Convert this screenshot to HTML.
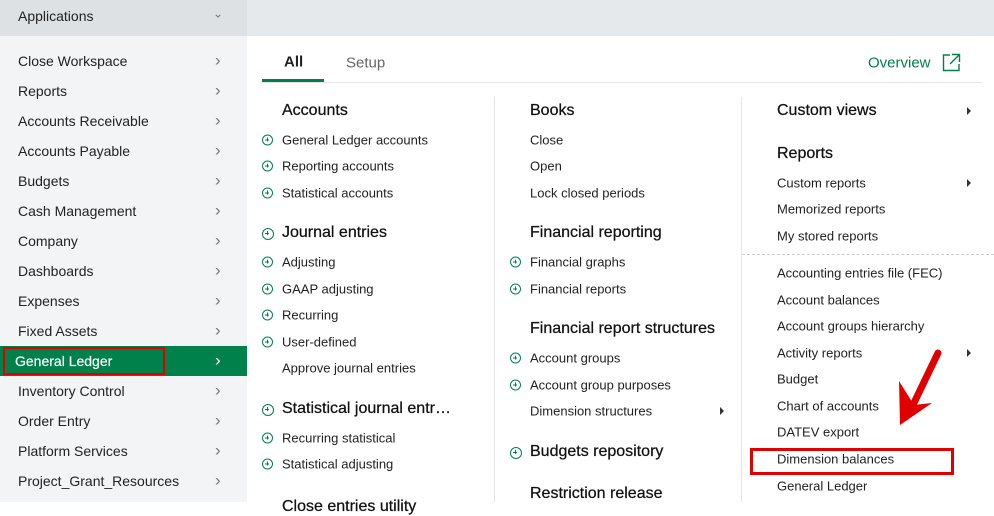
<!DOCTYPE html><html><head><style>
body{margin:0;width:994px;height:502px;overflow:hidden;background:#fff;font-family:"Liberation Sans",sans-serif;color:#222;position:relative}
.a{position:absolute;white-space:nowrap;transform:translateY(-50%)}
.s{font-size:14px;left:18px;color:#222}
.c{position:absolute;left:215px;font-size:17px;color:#777;transform:translateY(-52%)}
.i{font-size:13px;color:#222}
.h{font-size:16px;color:#111;-webkit-text-stroke:0.25px #111}
.p{position:absolute;width:11px;height:11px;border:1.5px solid #00804a;border-radius:50%;transform:translateY(-50%);box-sizing:border-box}
.p:before{content:"";position:absolute;left:2px;top:3.75px;width:4px;height:1.5px;background:#00804a}
.p:after{content:"";position:absolute;left:3.75px;top:2px;width:1.5px;height:4px;background:#00804a}
.tri{position:absolute;width:0;height:0;border-left:4px solid #333;border-top:4px solid transparent;border-bottom:4px solid transparent;transform:translateY(-50%)}
</style></head><body>
<div style="position:absolute;left:0;top:0;width:994px;height:36px;background:#e6e9eb"></div>
<div style="position:absolute;left:0;top:0;width:247px;height:36px;background:#dde1e4"></div>
<div class="a" style="left:18px;top:16px;font-size:14px">Applications</div>
<div class="c" style="top:14px;left:213px;font-size:12px">&#8964;</div>
<div style="position:absolute;left:0;top:36px;width:247px;height:466px;background:#f2f4f5"></div>
<div style="position:absolute;left:0;top:346px;width:247px;height:30px;background:#00804a"></div>
<div style="position:absolute;left:3px;top:347px;width:158px;height:24px;border:2px solid #e00000"></div>
<div class="a s" style="top:61px">Close Workspace</div><div class="c" style="top:61px">›</div>
<div class="a s" style="top:91px">Reports</div><div class="c" style="top:91px">›</div>
<div class="a s" style="top:121px">Accounts Receivable</div><div class="c" style="top:121px">›</div>
<div class="a s" style="top:151px">Accounts Payable</div><div class="c" style="top:151px">›</div>
<div class="a s" style="top:181px">Budgets</div><div class="c" style="top:181px">›</div>
<div class="a s" style="top:211px">Cash Management</div><div class="c" style="top:211px">›</div>
<div class="a s" style="top:241px">Company</div><div class="c" style="top:241px">›</div>
<div class="a s" style="top:271px">Dashboards</div><div class="c" style="top:271px">›</div>
<div class="a s" style="top:301px">Expenses</div><div class="c" style="top:301px">›</div>
<div class="a s" style="top:331px">Fixed Assets</div><div class="c" style="top:331px">›</div>
<div class="a s" style="top:361px;left:15px;color:#fff;-webkit-text-stroke:0.2px #fff">General Ledger</div><div class="c" style="top:361px;color:#fff">›</div>
<div class="a s" style="top:391px">Inventory Control</div><div class="c" style="top:391px">›</div>
<div class="a s" style="top:421px">Order Entry</div><div class="c" style="top:421px">›</div>
<div class="a s" style="top:451px">Platform Services</div><div class="c" style="top:451px">›</div>
<div class="a s" style="top:481px">Project_Grant_Resources</div><div class="c" style="top:481px">›</div>

<div class="a" style="left:284px;top:62px;font-size:15px;font-weight:bold;color:#222">All</div>
<div class="a" style="left:346px;top:63px;font-size:15px;color:#666">Setup</div>
<div style="position:absolute;left:262px;top:82px;width:720px;height:1px;background:#e4e4e4"></div>
<div style="position:absolute;left:262px;top:79px;width:62px;height:3px;background:#00804a"></div>
<div class="a" style="left:868px;top:63px;font-size:15px;color:#00804a">Overview</div>
<svg style="position:absolute;left:942px;top:53px" width="19" height="19" viewBox="0 0 19 19" fill="none" stroke="#00804a" stroke-width="1.4"><path d="M8 2H1.5v15.5H17V11"/><path d="M10 1.5h7.5V9M17.5 1.5L8 11"/></svg>
<div style="position:absolute;left:494px;top:97px;width:1px;height:405px;background:#e6e6e6"></div>
<div style="position:absolute;left:741px;top:97px;width:1px;height:405px;background:#e6e6e6"></div>
<div style="position:absolute;left:742px;top:254px;width:252px;border-top:1px dashed #ccc"></div>

<div class="a h" style="left:282px;top:111px">Accounts</div>
<div class="p" style="left:262px;top:140px"></div><div class="a i" style="left:282px;top:140px">General Ledger accounts</div>
<div class="p" style="left:262px;top:166px"></div><div class="a i" style="left:282px;top:166px">Reporting accounts</div>
<div class="p" style="left:262px;top:193px"></div><div class="a i" style="left:282px;top:193px">Statistical accounts</div>
<div class="p" style="left:262px;top:234px;width:12px;height:12px"></div><div class="a h" style="left:282px;top:233px">Journal entries</div>
<div class="p" style="left:262px;top:262px"></div><div class="a i" style="left:282px;top:262px">Adjusting</div>
<div class="p" style="left:262px;top:289px"></div><div class="a i" style="left:282px;top:289px">GAAP adjusting</div>
<div class="p" style="left:262px;top:315px"></div><div class="a i" style="left:282px;top:315px">Recurring</div>
<div class="p" style="left:262px;top:342px"></div><div class="a i" style="left:282px;top:342px">User-defined</div>
<div class="a i" style="left:282px;top:368px">Approve journal entries</div>
<div class="p" style="left:262px;top:410px;width:12px;height:12px"></div><div class="a h" style="left:282px;top:409px">Statistical journal entr…</div>
<div class="p" style="left:262px;top:438px"></div><div class="a i" style="left:282px;top:438px">Recurring statistical</div>
<div class="p" style="left:262px;top:464px"></div><div class="a i" style="left:282px;top:464px">Statistical adjusting</div>
<div class="a h" style="left:282px;top:507px">Close entries utility</div>

<div class="a h" style="left:530px;top:111px">Books</div>
<div class="a i" style="left:530px;top:140px">Close</div>
<div class="a i" style="left:530px;top:166px">Open</div>
<div class="a i" style="left:530px;top:193px">Lock closed periods</div>
<div class="a h" style="left:530px;top:233px">Financial reporting</div>
<div class="p" style="left:510px;top:262px"></div><div class="a i" style="left:530px;top:262px">Financial graphs</div>
<div class="p" style="left:510px;top:289px"></div><div class="a i" style="left:530px;top:289px">Financial reports</div>
<div class="a h" style="left:530px;top:329px">Financial report structures</div>
<div class="p" style="left:510px;top:358px"></div><div class="a i" style="left:530px;top:358px">Account groups</div>
<div class="p" style="left:510px;top:385px"></div><div class="a i" style="left:530px;top:385px">Account group purposes</div>
<div class="a i" style="left:530px;top:411px">Dimension structures</div><div class="tri" style="left:720px;top:411px"></div>
<div class="p" style="left:510px;top:453px;width:12px;height:12px"></div><div class="a h" style="left:530px;top:452px">Budgets repository</div>
<div class="a h" style="left:530px;top:494px">Restriction release</div>

<div class="a h" style="left:777px;top:111px">Custom views</div><div class="tri" style="left:967px;top:111px"></div>
<div class="a h" style="left:777px;top:154px">Reports</div>
<div class="a i" style="left:777px;top:183px">Custom reports</div><div class="tri" style="left:967px;top:183px"></div>
<div class="a i" style="left:777px;top:209px">Memorized reports</div>
<div class="a i" style="left:777px;top:236px">My stored reports</div>
<div class="a i" style="left:777px;top:273px">Accounting entries file (FEC)</div>
<div class="a i" style="left:777px;top:300px">Account balances</div>
<div class="a i" style="left:777px;top:326px">Account groups hierarchy</div>
<div class="a i" style="left:777px;top:353px">Activity reports</div><div class="tri" style="left:967px;top:353px"></div>
<div class="a i" style="left:777px;top:379px">Budget</div>
<div class="a i" style="left:777px;top:406px">Chart of accounts</div>
<div class="a i" style="left:777px;top:432px">DATEV export</div>
<div class="a i" style="left:777px;top:459px">Dimension balances</div>
<div style="position:absolute;left:750px;top:448px;width:198px;height:21px;border:3px solid #e00000"></div>
<div class="a i" style="left:777px;top:486px">General Ledger</div>
<svg style="position:absolute;left:890px;top:345px" width="60" height="85" viewBox="0 0 60 85"><path d="M48 8 L22 62" stroke="#e00000" stroke-width="7" stroke-linecap="round" fill="none"/><path d="M9 36 L10 80 L42 58 L24 60 Z" fill="#e00000"/></svg>
</body></html>
